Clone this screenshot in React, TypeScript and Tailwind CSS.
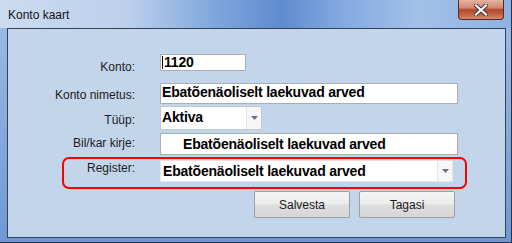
import React from "react"

const labelCls = "w-[127px] shrink-0 text-right text-[12px] leading-[14px] text-[#1b1b1b]"
const boxCls = "ml-[25px] shrink-0 bg-white border border-[#a9aeb5] flex items-center text-[14px] font-bold tracking-[-0.2px] text-black leading-[15px] whitespace-nowrap"

const DropArrow = () => (
  <div className="ml-auto h-full w-[15px] border-l border-[#e3e5e8] bg-[#f7f7f7] flex items-center justify-center">
    <svg width="7" height="4" viewBox="0 0 7 4"><path d="M0 0h7L3.5 4z" fill="#6e6c86" /></svg>
  </div>
)

const Row: React.FC<{ label: string; labelPad: string; mt: string; children: React.ReactNode }> = ({ label, labelPad, mt, children }) => (
  <div className={`flex items-start ${mt}`}>
    <div className={`${labelCls} ${labelPad}`}>{label}</div>
    {children}
  </div>
)

export default function App() {
  return (
    <div className="w-[512px] h-[243px] flex flex-col bg-[linear-gradient(180deg,#9fbde6,#6f98d3)] border-r border-b border-[#26344a] overflow-hidden" style={{ fontFamily: '"Liberation Sans", Arial, sans-serif' }}>
      {/* title bar */}
      <div className="h-[28px] shrink-0 flex items-start justify-between bg-[linear-gradient(90deg,#cbdbf0_0%,#bcd0ec_25%,#7fa6dc_42%,#5f8ccf_55%,#86abe0_68%,#a3c0e8_82%,#8fb1e2_100%)]">
        <span className="pl-[8px] pt-[8px] text-[12px] leading-[14px] text-[#141414]">Konto kaart</span>
        <div className="mr-[7px] w-[46px] h-[20px] rounded-b-[4px] border border-t-0 border-[#5a2a20] bg-[linear-gradient(180deg,#e6b3a0_0%,#d08a70_40%,#b04a2c_52%,#c2603f_75%,#d88a6a_100%)] flex items-center justify-center">
          <svg width="14" height="12" viewBox="0 0 14 12">
            <path d="M2 1.5 L12 10.5 M12 1.5 L2 10.5" stroke="#4a3340" strokeWidth="4.2" strokeLinecap="square" />
            <path d="M2 1.5 L12 10.5 M12 1.5 L2 10.5" stroke="#ffffff" strokeWidth="2.2" strokeLinecap="square" />
          </svg>
        </div>
      </div>

      {/* client area */}
      <div className="ml-[7px] w-[499px] h-[210px] shrink-0 border border-[#34435a] bg-[#c2d5ea] flex flex-col">
        <Row label="Konto:" labelPad="pt-[6px]" mt="mt-[25px]">
          <div className={`${boxCls} w-[86px] h-[17px] pl-[1px]`}>
            <span className="w-px h-[13px] bg-black mr-[1px]" />
            1120
          </div>
        </Row>
        <Row label="Konto nimetus:" labelPad="pt-[5px]" mt="mt-[9px]">
          <div className={`${boxCls} w-[298px] h-[21px] pl-[1px] pb-[2px]`}>Ebatõenäoliselt laekuvad arved</div>
        </Row>
        <Row label="Tüüp:" labelPad="pt-[7px]" mt="mt-[2px]">
          <div className={`${boxCls} w-[102px] h-[24px] pl-[1px] border-[#c4c8ce]`}>
            <span className="pb-[2px]">Aktiva</span>
            <DropArrow />
          </div>
        </Row>
        <Row label="Bil/kar kirje:" labelPad="pt-[3px]" mt="mt-[3px]">
          <div className={`${boxCls} w-[298px] h-[22px] pl-[22px]`}>Ebatõenäoliselt laekuvad arved</div>
        </Row>

        {/* highlighted register row */}
        <div className="mt-[2px] ml-[54px] w-[405px] h-[32px] border-2 border-[#ff0000] rounded-[7px] flex items-start pt-[1px]">
          <div className="w-[71px] shrink-0 text-right text-[12px] leading-[14px] text-[#1b1b1b] mt-[1px]">Register:</div>
          <div className={`${boxCls} w-[293px] h-[22px] pl-[2px] border-[#e4e6ea]`}>
            <span>Ebatõenäoliselt laekuvad arved</span>
            <DropArrow />
          </div>
        </div>

        {/* buttons */}
        <div className="mt-[2px] ml-[246px] flex gap-[9px]">
          {["Salvesta", "Tagasi"].map(t => (
            <div key={t} className="w-[96px] h-[27px] rounded-[2px] border border-[#9c9fa4] bg-[linear-gradient(180deg,#f4f4f4_0%,#ececec_48%,#dedede_52%,#d6d6d6_100%)] flex items-center justify-center text-[12px] text-[#1b1b1b]">
              {t}
            </div>
          ))}
        </div>
      </div>
    </div>
  )
}
